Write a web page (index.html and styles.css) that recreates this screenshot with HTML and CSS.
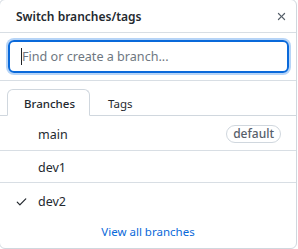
FILE: index.html
```html
<!DOCTYPE html>
<html lang="en">
<head>
    <meta charset="UTF-8">
    <meta name="viewport" content="width=device-width, initial-scale=1.0">
    <title>Switch branches/tags</title>
    <link rel="stylesheet" href="styles.css">
</head>
<body>
    <div class="popover">
        <!-- header -->
        <div class="popover-header">
            <span class="popover-title">Switch branches/tags</span>
            <button class="close-btn" aria-label="Close">
                <svg width="16" height="16" viewBox="0 0 16 16"><path d="M3.72 3.72a.75.75 0 0 1 1.06 0L8 6.94l3.22-3.22a.749.749 0 0 1 1.275.326.749.749 0 0 1-.215.734L9.06 8l3.22 3.22a.749.749 0 0 1-.326 1.275.749.749 0 0 1-.734-.215L8 9.06l-3.220 3.22a.751.751 0 0 1-1.042-.018.751.751 0 0 1-.018-1.042L6.94 8 3.72 4.78a.75.75 0 0 1 0-1.06Z"></path></svg>
            </button>
        </div>

        <!-- filter -->
        <div class="filter-section">
            <div class="filter-box"><span class="caret"></span><span class="placeholder">Find or create a branch...</span></div>
        </div>

        <!-- tabs -->
        <div class="tabs">
            <button class="tab active">Branches</button>
            <button class="tab">Tags</button>
        </div>

        <!-- branch list -->
        <div class="branch-list">
            <div class="branch-item">
                <span class="check"></span>
                <span class="branch-name">main</span>
                <span class="badge">default</span>
            </div>
            <div class="branch-item">
                <span class="check"></span>
                <span class="branch-name">dev1</span>
            </div>
            <div class="branch-item selected">
                <span class="check">
                    <svg width="16" height="16" viewBox="0 0 16 16"><path d="M13.78 4.22a.75.75 0 0 1 0 1.06l-7.25 7.25a.75.75 0 0 1-1.06 0L2.22 9.28a.751.751 0 0 1 .018-1.042.751.751 0 0 1 1.042-.018L6 10.94l6.72-6.72a.75.75 0 0 1 1.06 0Z"></path></svg>
                </span>
                <span class="branch-name">dev2</span>
            </div>
        </div>

        <div class="popover-footer">
            <a href="#" class="view-all">View all branches</a>
        </div>
    </div>
</body>
</html>
```

FILE: styles.css
```css
* {
    margin: 0;
    padding: 0;
    box-sizing: border-box;
    font-family: "Noto Sans", "Open Sans", sans-serif;
}

body {
    background-color: #fff;
}

.popover {
    width: 298px;
    height: 250px;
    margin: -1px 0 0 -1px;
    border: 1px solid #d0d7de;
    border-radius: 6px;
    background-color: #fff;
    overflow: hidden;
}

/* header */
.popover-header {
    height: 33px;
    padding: 0 5px 0 16px;
    display: flex;
    align-items: center;
    justify-content: space-between;
    border-bottom: 1px solid #d8dee4;
}

.popover-title {
    font-size: 12px;
    font-weight: 600;
    color: #24292f;
}

.close-btn {
    width: 20px;
    height: 20px;
    border: none;
    background: none;
    display: flex;
    align-items: center;
    justify-content: center;
    cursor: pointer;
}

.close-btn svg {
    fill: #57606a;
    width: 13px;
    height: 13px;
}

/* filter */
.filter-section {
    padding: 7px 7px 7px 8px;
    border-bottom: 1px solid #d8dee4;
}

.filter-box {
    height: 33px;
    border: 2px solid #0969da;
    border-radius: 6px;
    box-shadow: 0 0 0 2px #b6d4f7;
    display: flex;
    align-items: center;
    padding-left: 11px;
    font-size: 12.6px;
}

.caret {
    width: 1px;
    height: 17px;
    background-color: #1f2328;
}

.placeholder {
    color: #6e7781;
}

/* tabs */
.tabs {
    display: flex;
    height: 35px;
    padding: 8px 8px 0 7px;
    border-bottom: 1px solid #d0d7de;
}

.tab {
    height: 27px;
    padding: 2px 16px 0;
    border: 1px solid transparent;
    border-radius: 6px 6px 0 0;
    background: none;
    font-size: 11.5px;
    color: #24292f;
    cursor: pointer;
}

.tab.active {
    width: 83px;
    border-color: #d0d7de;
    border-bottom-color: #fff;
    background-color: #fff;
    font-weight: 500;
}

.tab + .tab {
    padding: 2px 17px 0;
}

/* branch list */
.branch-item {
    display: flex;
    align-items: center;
    height: 32px;
    padding: 2px 15px 0;
    border-bottom: 1px solid #d8dee4;
    font-size: 12.5px;
    color: #24292f;
}

.branch-item:first-child {
    height: 35px;
}

.branch-item:last-child {
    border-bottom: none;
    height: 34px;
}

.check {
    width: 16px;
    height: 16px;
    margin-right: 7px;
    display: flex;
    align-items: center;
}

.check svg {
    fill: #24292f;
    width: 13px;
    height: 13px;
}

.branch-name {
    flex: 1;
}

.badge {
    font-size: 12px;
    font-weight: 500;
    color: #57606a;
    border: 1px solid #d0d7de;
    border-radius: 10px;
    padding: 0 6px;
    line-height: 16px;
}

.popover-footer {
    text-align: center;
    padding-top: 2px;
}

.view-all {
    font-size: 11.5px;
    color: #0969da;
    text-decoration: none;
}
```
